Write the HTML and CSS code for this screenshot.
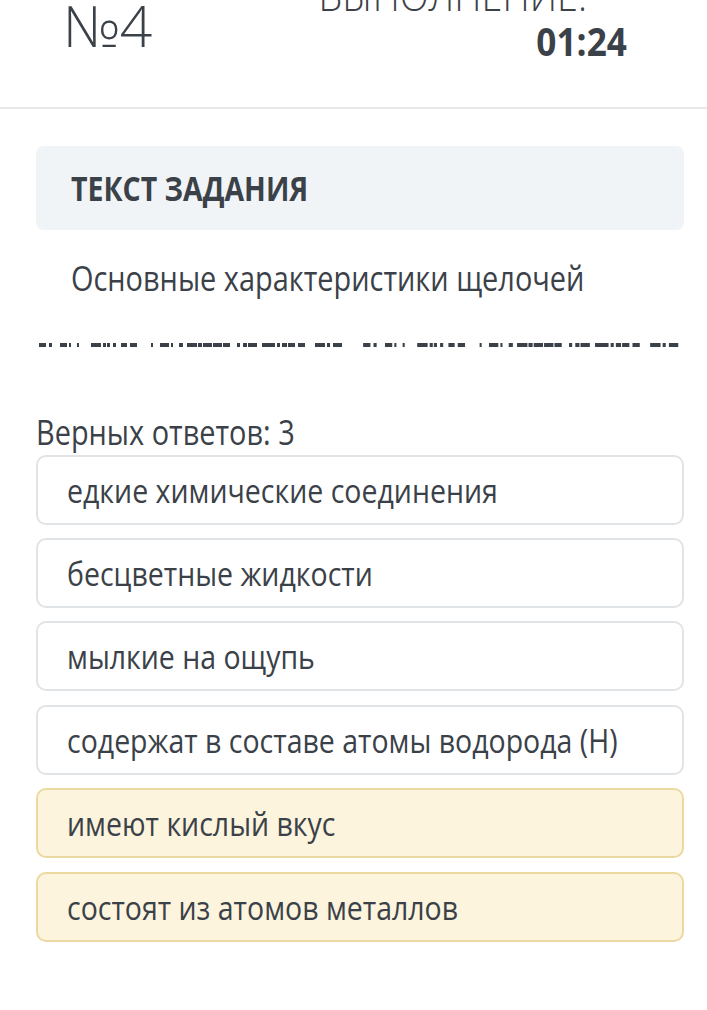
FILE: index.html
```html
<!DOCTYPE html>
<html lang="ru">
<head>
<meta charset="utf-8">
<title>Задание №4</title>
<link rel="stylesheet" href="styles.css">
</head>
<body>
<header class="top">
  <div class="question">
    <div class="q-num">№4</div>
  </div>
  <div class="timer">
    <div class="t-label"><span class="cond-r">ВЫПОЛНЕНИЕ:</span></div>
    <div class="t-val"><span class="cond-r">01:24</span></div>
  </div>
</header>
<main class="content">
  <div class="task-head"><span class="cond">ТЕКСТ ЗАДАНИЯ</span></div>
  <p class="task-text"><span class="cond">Основные характеристики щелочей</span></p>
  <svg class="dashes" width="648" height="4" viewBox="0 0 648 4" aria-hidden="true">
    <g id="dashrow" fill="#3b4148">
      <rect x="3" y="0" width="7" height="4"/>
      <rect x="13" y="0" width="3" height="4"/>
      <rect x="24" y="0" width="7" height="4"/>
      <rect x="33" y="0" width="2" height="4"/>
      <rect x="41" y="0" width="2" height="4"/>
      <rect x="55" y="0" width="10" height="4"/>
      <rect x="67" y="0" width="3" height="4"/>
      <rect x="71" y="0" width="3" height="4"/>
      <rect x="77" y="0" width="3" height="4"/>
      <rect x="85" y="0" width="6" height="4"/>
      <rect x="94" y="0" width="7" height="4"/>
      <rect x="115" y="0" width="2" height="4"/>
      <rect x="124" y="0" width="9" height="4"/>
      <rect x="135" y="0" width="2" height="4"/>
      <rect x="143" y="0" width="4" height="4"/>
      <rect x="151" y="0" width="10" height="4"/>
      <rect x="162" y="0" width="4" height="4"/>
      <rect x="167" y="0" width="9" height="4"/>
      <rect x="177" y="0" width="9" height="4"/>
      <rect x="187" y="0" width="7" height="4"/>
      <rect x="201" y="0" width="3" height="4"/>
      <rect x="207" y="0" width="4" height="4"/>
      <rect x="212" y="0" width="9" height="4"/>
      <rect x="226" y="0" width="13" height="4"/>
      <rect x="241" y="0" width="3" height="4"/>
      <rect x="246" y="0" width="5" height="4"/>
      <rect x="252" y="0" width="7" height="4"/>
      <rect x="262" y="0" width="7" height="4"/>
      <rect x="279" y="0" width="10" height="4"/>
      <rect x="291" y="0" width="3" height="4"/>
      <rect x="297" y="0" width="9" height="4"/>
    </g>
    <use href="#dashrow" transform="translate(324 0) scale(1.04 1)"/>
  </svg>
  <div class="count"><span class="cond">Верных ответов: 3</span></div>
  <ul class="answers">
    <li class="answer"><span class="cond">едкие химические соединения</span></li>
    <li class="answer"><span class="cond">бесцветные жидкости</span></li>
    <li class="answer"><span class="cond">мылкие на ощупь</span></li>
    <li class="answer"><span class="cond">содержат в составе атомы водорода (H)</span></li>
    <li class="answer answer-picked"><span class="cond">имеют кислый вкус</span></li>
    <li class="answer answer-picked"><span class="cond">состоят из атомов металлов</span></li>
  </ul>
</main>
</body>
</html>
```

FILE: styles.css
```css
html, body {
  margin: 0;
  padding: 0;
  background: #ffffff;
}

body {
  width: 707px;
  height: 1010px;
  overflow: hidden;
  font-family: "Open Sans", "Noto Sans", sans-serif;
  color: #3b4148;
}

.cond {
  display: inline-block;
  white-space: nowrap;
  transform: scaleX(0.85);
  transform-origin: left center;
}

.cond-r {
  display: inline-block;
  white-space: nowrap;
  transform: scaleX(0.88);
  transform-origin: right center;
}

.top {
  display: flex;
  height: 107px;
  border-bottom: 2px solid #e6e8ea;
  overflow: hidden;
  padding-left: 63px;
  padding-right: 80px;
}

.q-num {
  font-size: 57px;
  font-weight: 300;
  line-height: 1;
  margin-top: -3px;
  letter-spacing: -1px;
}

.timer {
  margin-left: auto;
  display: flex;
  flex-direction: column;
  align-items: flex-end;
}

.t-label {
  font-size: 43px;
  font-weight: 300;
  line-height: 1;
  margin-top: -27px;
  margin-right: 40px;
  white-space: nowrap;
}

.t-val {
  font-size: 40px;
  font-weight: 700;
  line-height: 1;
  margin-top: 5px;
}

.content {
  padding: 0 23px 0 36px;
}

.task-head {
  margin-top: 37px;
  height: 84px;
  display: flex;
  align-items: center;
  padding-left: 35px;
  background: #f1f4f6;
  border-radius: 8px;
  font-size: 33.5px;
  font-weight: 700;
}

.task-text {
  margin: 28px 0 0 0;
  padding-left: 35px;
  font-size: 34px;
  line-height: 1.2;
}

.dashes {
  display: block;
  margin-top: 44px;
}

.count {
  margin-top: 65px;
  font-size: 34px;
  line-height: 1.2;
}

.answers {
  list-style: none;
  margin: 2px 0 0 0;
  padding: 0;
  display: flex;
  flex-direction: column;
  gap: 13.4px;
}

.answer {
  box-sizing: border-box;
  height: 70px;
  display: flex;
  align-items: center;
  padding-left: 29px;
  border: 2px solid #e0e4e7;
  border-radius: 10px;
  font-size: 33.5px;
  white-space: nowrap;
}

.answer-picked {
  background: #fcf4dd;
  border-color: #ecd9a2;
}
```
